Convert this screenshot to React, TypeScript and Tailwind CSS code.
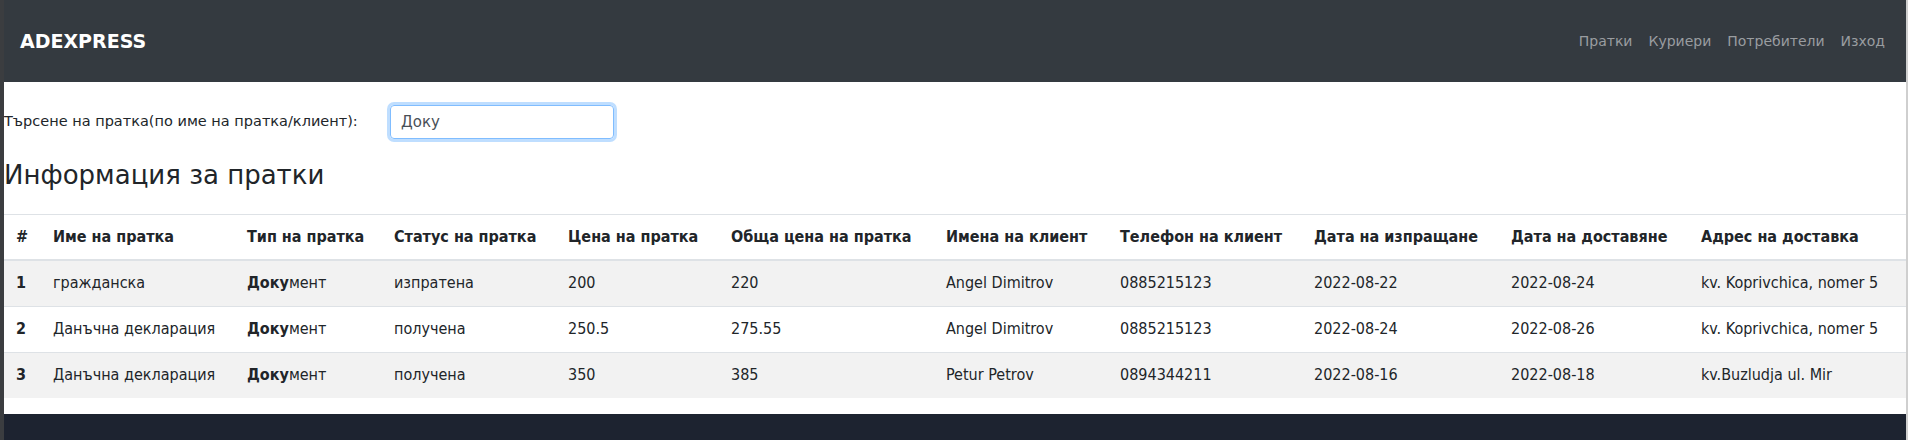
const columns = [
  { label: '#', width: 'w-[37px]' },
  { label: 'Име на пратка', width: 'w-[194px]' },
  { label: 'Тип на пратка', width: 'w-[147px]' },
  { label: 'Статус на пратка', width: 'w-[174px]' },
  { label: 'Цена на пратка', width: 'w-[163px]' },
  { label: 'Обща цена на пратка', width: 'w-[215px]' },
  { label: 'Имена на клиент', width: 'w-[174px]' },
  { label: 'Телефон на клиент', width: 'w-[194px]' },
  { label: 'Дата на изпращане', width: 'w-[197px]' },
  { label: 'Дата на доставяне', width: 'w-[190px]' },
  { label: 'Адрес на доставка', width: 'w-[217px]' },
]

const rows = [
  ['1', 'гражданска', 'изпратена', '200', '220', 'Angel Dimitrov', '0885215123', '2022-08-22', '2022-08-24', 'kv. Koprivchica, nomer 5'],
  ['2', 'Данъчна декларация', 'получена', '250.5', '275.55', 'Angel Dimitrov', '0885215123', '2022-08-24', '2022-08-26', 'kv. Koprivchica, nomer 5'],
  ['3', 'Данъчна декларация', 'получена', '350', '385', 'Petur Petrov', '0894344211', '2022-08-16', '2022-08-18', 'kv.Buzludja ul. Mir'],
]

const navLinks = ['Пратки', 'Куриери', 'Потребители', 'Изход']

function Navbar() {
  return (
    <nav className="flex h-[82px] items-center justify-between bg-[#343a40] pl-[16px] pr-[13px]">
      <a className="text-[19px] font-bold text-white">ADEXPRESS</a>
      <ul className="flex items-center">
        {navLinks.map((link) => (
          <li key={link}>
            <a className="px-2 text-[14px] text-[#9a9da0]">{link}</a>
          </li>
        ))}
      </ul>
    </nav>
  )
}

function ParcelTable() {
  return (
    <table className="mb-[16px] w-full table-fixed border-collapse font-['DejaVu_Sans_Condensed','DejaVu_Sans',sans-serif] text-[16px] font-stretch-condensed text-[#212529]">
      <colgroup>
        {columns.map((c) => (
          <col key={c.label} className={c.width} />
        ))}
      </colgroup>
      <thead>
        <tr className="h-[46px]">
          {columns.map((c) => (
            <th
              key={c.label}
              className="border-t border-b-2 border-[#dee2e6] px-3 text-left font-bold whitespace-nowrap"
            >
              {c.label}
            </th>
          ))}
        </tr>
      </thead>
      <tbody>
        {rows.map((r, i) => (
          <tr key={r[0]} className={i % 2 === 0 ? 'h-[46px] bg-[#f2f2f2]' : 'h-[46px] bg-white'}>
            <td className="border-t border-[#dee2e6] px-3 font-bold">{r[0]}</td>
            <td className="border-t border-[#dee2e6] px-3 whitespace-nowrap">{r[1]}</td>
            <td className="border-t border-[#dee2e6] px-3 whitespace-nowrap">
              <b>Доку</b>мент
            </td>
            {r.slice(2).map((v, j) => (
              <td key={j} className="border-t border-[#dee2e6] px-3 whitespace-nowrap">
                {v}
              </td>
            ))}
          </tr>
        ))}
      </tbody>
    </table>
  )
}

export default function App() {
  return (
    <div className="flex h-[440px] overflow-hidden font-['DejaVu_Sans',sans-serif]">
      <div className="w-[4px] shrink-0 bg-[#3b3d40]" />
      <div className="flex min-w-0 flex-1 flex-col bg-white">
        <Navbar />
        <main className="flex-1">
          <div className="mt-[23px] flex items-center">
            <label className="w-[386px] text-[14.5px] text-[#212529]">
              Търсене на пратка(по име на пратка/клиент):
            </label>
            <input
              readOnly
              value="Доку"
              className="h-[34px] w-[224px] rounded border border-[#80bdff] px-[10px] text-[15px] text-[#495057] ring-[3px] ring-[#007bff]/25 outline-none"
            />
          </div>
          <h2 className="mt-[18px] mb-[21px] h-[36px] text-[26px] leading-[36px] text-[#212529]">
            Информация за пратки
          </h2>
          <ParcelTable />
        </main>
        <footer className="h-[26px] bg-[#1d2330]" />
      </div>
      <div className="w-[2px] shrink-0 bg-[#cfcfcf]" />
    </div>
  )
}
